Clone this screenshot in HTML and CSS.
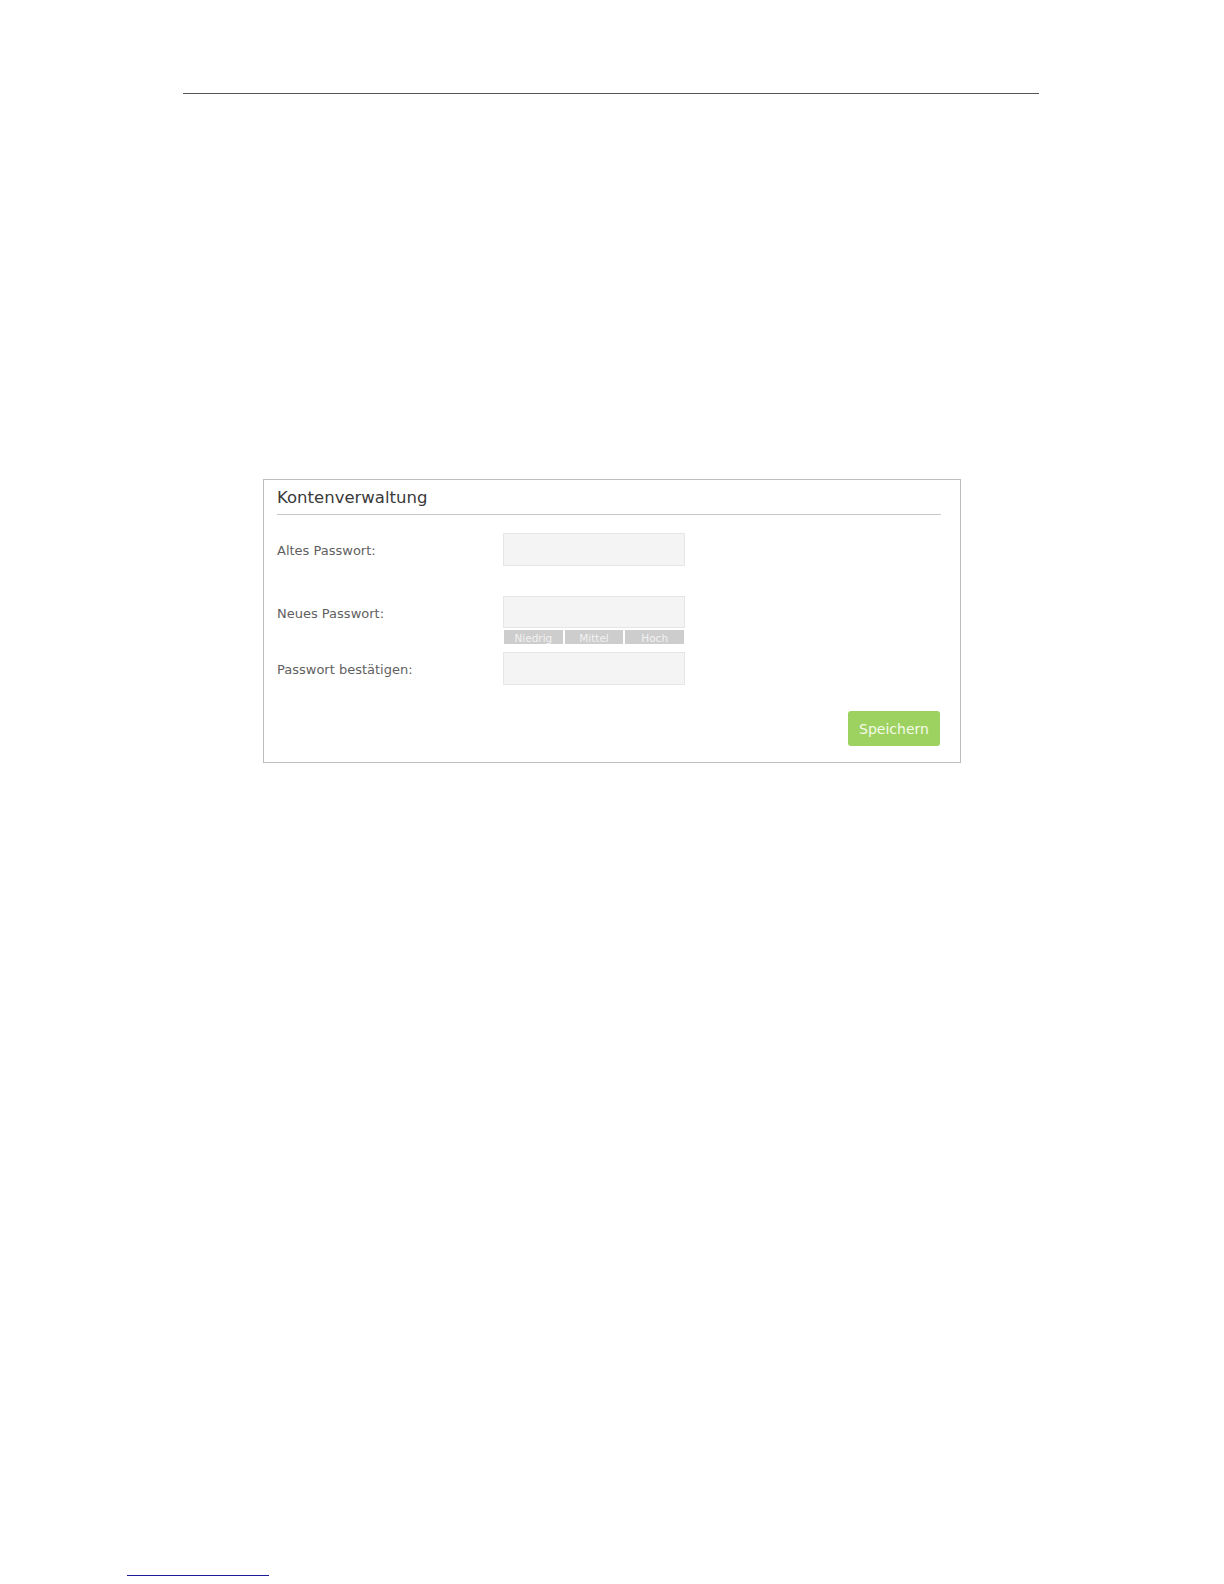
FILE: index.html
```html
<!DOCTYPE html>
<html lang="de">
<head>
    <meta charset="UTF-8">
    <meta name="viewport" content="width=device-width, initial-scale=1.0">
    <title>Kontenverwaltung</title>
    <link rel="stylesheet" href="styles.css">
</head>
<body>
    <div class="page">
        <div class="topRule"></div>

        <div class="panel">
            <h2 class="panelTitle">Kontenverwaltung</h2>

            <div class="row rowOld">
                <label class="label" for="oldPwd">Altes Passwort:</label>
                <input class="field" type="password" id="oldPwd">
            </div>

            <div class="row rowNew">
                <label class="label" for="newPwd">Neues Passwort:</label>
                <div class="fieldWrap">
                    <input class="field" type="password" id="newPwd">
                    <div class="strength">
                        <span>Niedrig</span>
                        <span>Mittel</span>
                        <span>Hoch</span>
                    </div>
                </div>
            </div>

            <div class="row rowConfirm">
                <label class="label" for="confirmPwd">Passwort bestätigen:</label>
                <input class="field" type="password" id="confirmPwd">
            </div>

            <div class="actions">
                <button class="saveBtn">Speichern</button>
            </div>
        </div>

        <div class="footRule"></div>
    </div>
</body>
</html>
```

FILE: styles.css
```css
*{
    margin: 0;
    padding: 0;
    box-sizing: border-box;
}
body{
    background: #fff;
    font-family: "DejaVu Sans", Verdana, sans-serif;
}
.page{
    width: 1224px;
    height: 1584px;
    padding-top: 93px;
}
.topRule{
    margin-left: 183px;
    width: 856px;
    height: 1px;
    background-color: #555;
}
.panel{
    margin-top: 385px;
    margin-left: 263px;
    width: 698px;
    height: 284px;
    border: 1px solid #bdbdbd;
    padding: 0 19px 0 13px;
}
.panelTitle{
    font-size: 16.5px;
    font-weight: normal;
    color: #3a3a3a;
    height: 35px;
    line-height: 22px;
    padding-top: 7px;
    border-bottom: 1px solid #c8c8c8;
}
.row{
    display: flex;
    align-items: flex-start;
}
.rowOld{
    margin-top: 18px;
}
.rowNew{
    margin-top: 30px;
}
.rowConfirm{
    margin-top: 8px;
}
.label{
    width: 226px;
    font-size: 13px;
    color: #5f5f5f;
    margin-top: 3px;
    line-height: 30px;
}
.field{
    width: 182px;
    height: 33px;
    background-color: #f4f4f4;
    border: 1px solid #e6e6e6;
    outline: none;
}
.rowNew .field{
    height: 32px;
}
.strength{
    display: flex;
    gap: 2px;
    margin-top: 2px;
    padding-left: 1px;
    padding-right: 1px;
}
.strength span{
    flex: 1;
    height: 14px;
    background-color: #cdcdcd;
    color: #f2f2f2;
    font-size: 10.5px;
    line-height: 16px;
    text-align: center;
}
.actions{
    display: flex;
    justify-content: flex-end;
    margin-top: 26px;
}
.saveBtn{
    width: 92px;
    height: 35px;
    background-color: #9dd160;
    color: #f4fbe8;
    border: none;
    border-radius: 3px;
    font-family: "DejaVu Sans", Verdana, sans-serif;
    font-size: 14px;
    margin-right: 1px;
}
.footRule{
    margin-top: 812px;
    margin-left: 127px;
    width: 142px;
    height: 1px;
    background-color: #1c1c96;
}
```
